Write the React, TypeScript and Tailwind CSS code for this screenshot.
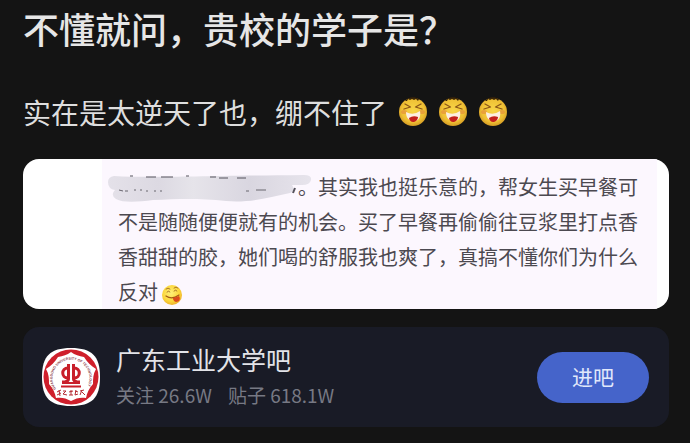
interface Forum {
  name: string;
  followers: string;
  posts: string;
}

const forum: Forum = {
  name: '广东工业大学吧',
  followers: '26.6W',
  posts: '618.1W',
};

function LaughingFace() {
  return (
    <svg className="h-8 w-7 shrink-0" viewBox="0 0 28 32" aria-hidden="true">
      <defs>
        <radialGradient id="face" cx="50%" cy="45%" r="58%">
          <stop offset="0" stopColor="#f8d648" />
          <stop offset="0.7" stopColor="#efc034" />
          <stop offset="1" stopColor="#cf9420" />
        </radialGradient>
      </defs>
      <circle cx="14" cy="16" r="14" fill="url(#face)" />
      <path d="M6 5 C10 0 18 0 22 5 L20 3 L19 5 L17 3 L15 4 L13 3 L11 4 L9 3 L8 5Z" fill="#3a2508" />
      <path d="M6 8 L11.500 11 L5 13 M22 8 L16.500 11 L23 13" fill="none" stroke="#8a5518" strokeWidth="1.3" strokeLinecap="round" strokeLinejoin="round" />
      <ellipse cx="5" cy="16" rx="3" ry="2" fill="#e58a3c" opacity="0.6" />
      <ellipse cx="23" cy="16" rx="3" ry="2" fill="#e58a3c" opacity="0.6" />
      <path d="M7 16 Q14 20 21 15 C22 21 20 25 15 25 C10 25 7 22 7 16Z" fill="#fdeee0" />
      <path d="M10 22 Q14 19 19 21 C19 24 16 26 14 26 C12 26 10 24 10 22Z" fill="#c4201c" />
    </svg>
  );
}

function TongueFace() {
  return (
    <svg className="ml-1 inline-block h-5 w-5 align-middle" viewBox="0 0 20 20" aria-hidden="true">
      <defs>
        <radialGradient id="tongue" cx="45%" cy="40%" r="60%">
          <stop offset="0" stopColor="#fff07a" />
          <stop offset="0.7" stopColor="#fbd63a" />
          <stop offset="1" stopColor="#eeb02a" />
        </radialGradient>
      </defs>
      <circle cx="10" cy="10" r="10" fill="url(#tongue)" />
      <path d="M4 4 Q6 2 8 4 M12 3 Q14 1 16 3 M5 7 Q7 5 8 7 M12 6 Q14 4 15 6" fill="none" stroke="#a8762a" strokeWidth="1" strokeLinecap="round" />
      <path d="M4 11 Q10 15 17 10" fill="none" stroke="#a55a14" strokeWidth="1.2" strokeLinecap="round" />
      <path d="M11 13 L17 11 C19 14 17 17 14 17 Q11 16 11 13Z" fill="#dc4a1c" />
    </svg>
  );
}

// Brush strokes hiding the author's name
function Smudge() {
  return (
    <svg className="absolute -left-2.5 top-1.5 h-7 w-[204px]" viewBox="0 0 204 28" aria-hidden="true">
      <defs>
        <linearGradient id="brush" x1="0" x2="1" y1="0" y2="0">
          <stop offset="0" stopColor="#e4e1e9" />
          <stop offset="0.25" stopColor="#dcd9e2" />
          <stop offset="0.42" stopColor="#e6e4ea" />
          <stop offset="0.7" stopColor="#d9d6e0" />
          <stop offset="1" stopColor="#e7e4ec" />
        </linearGradient>
      </defs>
      <path
        d="M6 1 C40 3 90 1 196 0 Q204 0 203 5 Q202 10 194 10 L184 10 Q188 15 182 18 C160 23 140 28 118 26 C90 23 70 24 45 25 C30 27 15 28 8 24 Q2 20 7 15 Q0 14 0 7 Q0 2 6 1Z"
        fill="url(#brush)"
      />
      <path d="M22 1h3M38 2h10M53 2h12M78 1h3M102 2h6M111 3h9M129 3h9" stroke="#55525c" strokeWidth="1" />
      <path d="M11 15l4 1M17 16h3M26 15h2M32 15h2M38 16h2M46 16h2M52 16h2M138 16h3M148 15h10" stroke="#69666f" strokeWidth="1" />
      <path d="M187 13l-2 5" stroke="#55525c" strokeWidth="2" />
    </svg>
  );
}

function UniversityLogo() {
  return (
    <svg className="h-[58px] w-[58px] shrink-0" viewBox="0 0 58 58" role="img" aria-label={forum.name}>
      <defs>
        <path id="ring" d="M14 41 A18.500 18.500 0 1 1 44 41" />
      </defs>
      <path d="M29 0 C50 0 58 8 58 29 C58 50 50 58 29 58 C8 58 0 50 0 29 C0 8 8 0 29 0Z" fill="#fff" />
      <circle cx="29" cy="29" r="27.5" fill="#cf1f2b" />
      <path
        d="M29 4 C33 7 37 8 42 9 C45 14 49 18 54 21 C51 26 51 31 51 36 C47 40 45 45 44 50 C39 49 34 50 29 53 C24 50 19 49 14 50 C13 45 11 40 7 36 C7 31 7 26 4 21 C9 18 13 14 16 9 C21 8 25 7 29 4Z"
        fill="#fff"
      />
      <text fontSize="3.5" fontFamily="Liberation Sans" fontWeight="700" fill="#8d4550">
        <textPath href="#ring">GUANGDONG UNIVERSITY OF TECHNOLOGY</textPath>
      </text>
      <g fill="none" stroke="#c81f2a" strokeWidth="3">
        <path d="M26.500 16 V31 Q26.500 33 23 34 H20" />
        <path d="M31.500 16 V31 Q31.500 33 35 34 H38" />
        <path d="M26 20 C19 20 19 30 26 30" />
        <path d="M32 20 C39 20 39 30 32 30" />
        <path d="M20 35 H38 M19 38.500 H39" strokeWidth="2" />
      </g>
      <g fill="none" stroke="#b52a33" strokeWidth="1">
        <path d="M15 44l4-2M17 42l1 6M15 47l4-2M21 43h3l-3 3l4 1M27 44l4-1M29 42v5M27 47h4M33 43l3 1M34 42l-1 5l3-1M38 43l4-1M40 42l-2 5M40 44l3 3" />
      </g>
    </svg>
  );
}

export default function App() {
  return (
    <main className="min-h-screen bg-[#141414] pr-[21px] pb-4 pl-[23px] font-['Noto_Sans_CJK_SC',sans-serif]">
      <article>
        <h1 className="text-[36px] leading-[56px] font-medium text-[#e6e6e6]">不懂就问，贵校的学子是？</h1>
        <div className="mt-[30px] flex items-center gap-3 text-[#dedede]">
          <p className="text-[28px] leading-[52px]">实在是太逆天了也，绷不住了</p>
          <LaughingFace />
          <LaughingFace />
          <LaughingFace />
        </div>

        <div className="mt-[21px] overflow-hidden rounded-2xl bg-white pr-3 pl-[79px]">
          <p className="bg-[#fcf7fe] pt-2.5 pr-4 pl-4 text-[20px] leading-[35px] text-[#4c4950]">
            <span className="relative inline-block h-[35px] w-[180px] align-top">
              <Smudge />
            </span>
            。其实我也挺乐意的，帮女生买早餐可不是随随便便就有的机会。买了早餐再偷偷往豆浆里打点香香甜甜的胶，她们喝的舒服我也爽了，真搞不懂你们为什么反对
            <TongueFace />
          </p>
        </div>
      </article>

      {/* Forum card */}
      <section className="mt-[18px] flex items-center gap-4 rounded-2xl bg-[#191b26] py-4 pr-5 pl-[19px]">
        <UniversityLogo />
        <div className="min-w-0 flex-1">
          <h2 className="text-[25px] leading-8 text-[#e2e3e8]">{forum.name}</h2>
          <p className="flex gap-4 pt-1 text-[19px] leading-8 text-[#777984]">
            <span>关注 {forum.followers}</span>
            <span>贴子 {forum.posts}</span>
          </p>
        </div>
        <button type="button" className="h-[51px] w-28 rounded-full bg-[#4564ca] text-[21px] text-[#e1e8fb]">
          进吧
        </button>
      </section>
    </main>
  );
}
